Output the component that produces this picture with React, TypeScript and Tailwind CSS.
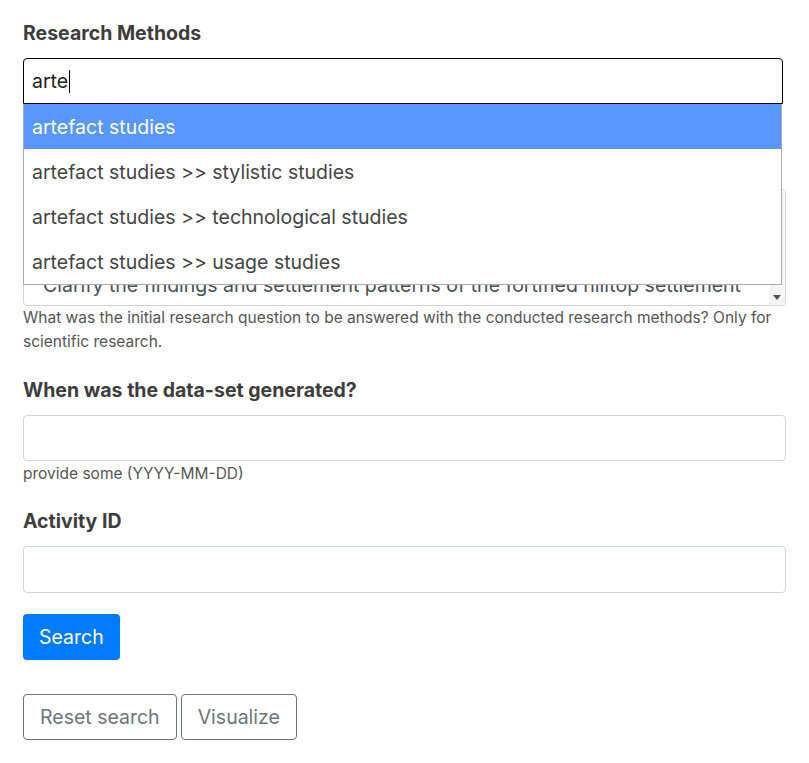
import React from "react";

const font = { fontFamily: "Inter, 'Liberation Sans', sans-serif" };

export default function App() {
  return (
    <div className="min-h-[763px] w-[809px] bg-white px-[23px] pt-[18px] text-[19.5px] leading-[30px] text-[#444]" style={font}>
      {/* Research Methods */}
      <div className="relative">
        <label className="mb-[10px] block font-bold text-[#3d3d3d]">Research Methods</label>
        <div className="relative z-10 w-[760px]">
          <div className="flex h-[46px] items-center rounded-t-[4px] border border-black bg-white pl-[8px] text-[#222]">
            <span>arte</span>
            <span className="ml-px inline-block h-[23px] w-px bg-black" />
          </div>
          <ul className="absolute left-0 top-[46px] w-[759px] border border-t-0 border-[#aaa] bg-white">
            <li className="flex h-[45px] items-center bg-[#5897fb] pl-[8px] text-white">artefact studies</li>
            <li className="flex h-[45px] items-center pl-[8px]">artefact studies &gt;&gt; stylistic studies</li>
            <li className="flex h-[45px] items-center pl-[8px]">artefact studies &gt;&gt; technological studies</li>
            <li className="flex h-[45px] items-center pl-[8px]">artefact studies &gt;&gt; usage studies</li>
          </ul>
        </div>
      </div>

      {/* Research question (partly hidden) */}
      <div className="mt-[85px]">
        <div className="relative h-[117px] overflow-hidden rounded-[4px] border border-[#ced4da] bg-white">
          <div className="mt-[80px] pl-[19px] pr-[24px] text-[#495057]">
            <div className="whitespace-nowrap">Clarify the findings and settlement patterns of the fortified hilltop settlement</div>
            <div className="whitespace-nowrap pl-[30px]">sequentially before the creation of fortification walls and boards.</div>
          </div>
          <div className="absolute right-0 top-0 flex h-full w-[16px] flex-col justify-end bg-[#f4f4f4] pb-[5px]">
            <div className="mx-auto h-0 w-0 border-x-[4px] border-t-[5px] border-x-transparent border-t-[#505050]" />
          </div>
        </div>
        <p className="text-[15.5px] leading-[24px] text-[#555]">
          What was the initial research question to be answered with the conducted research methods? Only for scientific research.
        </p>
      </div>

      {/* Date */}
      <div className="mt-[21px]">
        <label className="mb-[10px] block font-bold text-[#3d3d3d]">When was the data-set generated?</label>
        <div className="h-[46px] rounded-[4px] border border-[#ced4da] bg-white" />
        <p className="mt-px text-[15.5px] leading-[24px] text-[#555]">provide some (YYYY-MM-DD)</p>
      </div>

      {/* Activity ID */}
      <div className="mt-[20px]">
        <label className="mb-[10px] block font-bold text-[#3d3d3d]">Activity ID</label>
        <div className="h-[47px] rounded-[4px] border border-[#ced4da] bg-white" />
      </div>

      <div className="mt-[21px]">
        <button className="h-[46px] rounded-[4px] bg-[#007bff] px-[16px] text-white">Search</button>
      </div>

      <div className="mt-[34px] flex gap-[4px]">
        <button className="h-[46px] rounded-[4px] border border-[#6c757d] bg-white px-[16px] text-[#6c757d]">Reset search</button>
        <button className="h-[46px] rounded-[4px] border border-[#6c757d] bg-white px-[16px] text-[#6c757d]">Visualize</button>
      </div>
    </div>
  );
}
